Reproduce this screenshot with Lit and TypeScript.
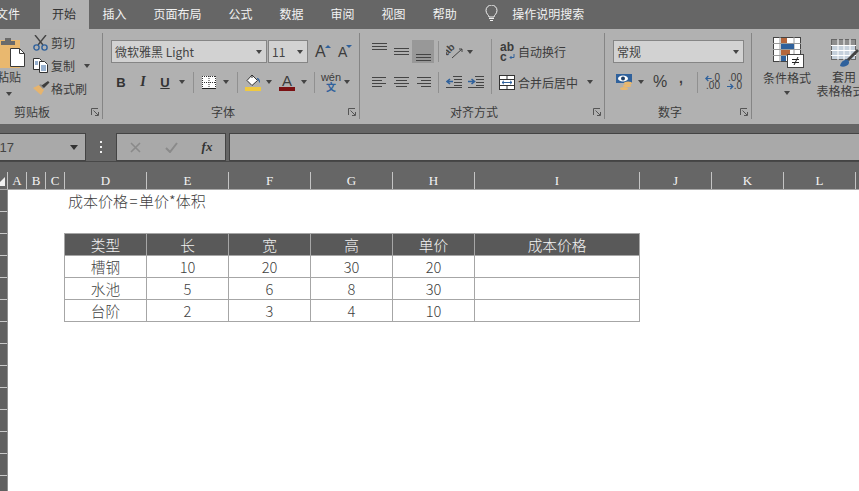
import { LitElement, html, svg, css } from 'lit';
import { customElement } from 'lit/decorators.js';

const TABS = ['文件', '开始', '插入', '页面布局', '公式', '数据', '审阅', '视图', '帮助'];
const COLS: [string, number][] = [
  ['A', 19], ['B', 19], ['C', 19], ['D', 82], ['E', 82], ['F', 82], ['G', 82],
  ['H', 82], ['I', 165], ['J', 72], ['K', 72], ['L', 72], ['', 20],
];
const HEAD = ['类型', '长', '宽', '高', '单价', '成本价格'];
const ROWS = [
  ['槽钢', '10', '20', '30', '20', ''],
  ['水池', '5', '6', '8', '30', ''],
  ['台阶', '2', '3', '4', '10', ''],
];

// horizontal lines used by the alignment icons: [x1, x2, y]
const lines = (w: number, h: number, items: number[][], color = '#444') => html`
  <svg width=${w} height=${h} viewBox="0 0 ${w} ${h}">
    ${items.map(l => svg`<path d="M${l[0]} ${l[2]}.5H${l[1]}" stroke=${color} fill="none"></path>`)}
  </svg>`;

const launcher = html`
  <svg class="launch" width="8" height="8" viewBox="0 0 8 8">
    <path d="M.5 7V.5H7M2.5 2.5L7 7M7.5 4V7.5H4" fill="none" stroke="#555"></path>
  </svg>`;

const scissors = html`
  <svg width="15" height="16" viewBox="0 0 15 16">
    <path d="M2 0l8 10M13 0L5 10" stroke="#444" stroke-width="1.4" fill="none"></path>
    <circle cx="3.5" cy="12.5" r="2.6" fill="none" stroke="#2f619c" stroke-width="1.4"></circle>
    <circle cx="11.5" cy="12.5" r="2.6" fill="none" stroke="#2f619c" stroke-width="1.4"></circle>
  </svg>`;

const copyIcon = html`
  <svg width="16" height="15" viewBox="0 0 16 15">
    <path d="M.5.5h6l2 2v9h-8z" fill="#fff" stroke="#333"></path>
    <path d="M6.5 3.5h5l3 3v8h-8z" fill="#fff" stroke="#333"></path>
    <path d="M8 8h5M8 10h5M8 12h5M2 4h3M2 6h3" stroke="#2f619c" fill="none"></path>
  </svg>`;

const brush = html`
  <svg width="17" height="15" viewBox="0 0 17 15">
    <path d="M0 7l6-3 5 5-3 5z" fill="#e6b46e"></path>
    <path d="M6 4l2-1 3 3-1 2z" fill="#8d8d8d"></path>
    <path d="M8.500 4.500L15 0l1.500 1.500L11 7z" fill="#3d3d3d"></path>
  </svg>`;

const paste = html`
  <svg width="50" height="33" viewBox="0 0 50 33">
    <rect x="3" y="3" width="33" height="28" fill="#e9b86f"></rect>
    <path d="M17 4h4V1h6v3h4v4H17z" fill="#6b6b6b"></path>
    <path d="M26.500 11.500h9l5 5v13h-14z" fill="#fff" stroke="#3a3a3a"></path>
    <path d="M35.500 11.500v5h5" fill="none" stroke="#3a3a3a"></path>
  </svg>`;

const borders = html`
  <svg width="14" height="13" viewBox="0 0 14 13">
    <rect width="14" height="13" fill="#fff"></rect>
    <path d="M.5 0v13M13.500 0v13M7 0v13M0 .5h14M0 6.500h14" stroke="#333" stroke-dasharray="1 1" fill="none"></path>
    <path d="M0 12.500h14" stroke="#222" fill="none"></path>
  </svg>`;

const bucket = html`
  <svg width="16" height="17" viewBox="0 0 16 17">
    <path d="M7 1l5.500 5.500L7 11.500 2 6.500z" fill="#fff" stroke="#333"></path>
    <path d="M7 1V4" stroke="#333" fill="none"></path>
    <path d="M12 4c2 0 3 2 3 4 0 1-1 1-1 0s-1-2-2-3z" fill="#2f619c"></path>
    <rect y="13" width="16" height="4" fill="#f0c940"></rect>
  </svg>`;

const orient = html`
  <svg width="17" height="16" viewBox="0 0 17 16">
    <text x="1" y="12" transform="rotate(-45 1 12) " font-family="Liberation Sans, sans-serif" font-size="10" font-weight="700" fill="#444">ab</text>
    <path d="M6 14L16 5M16 5h-3M16 5v3" stroke="#444" fill="none"></path>
  </svg>`;

const indent = (flip: boolean) => html`
  <svg width="16" height="12" viewBox="0 0 16 12">
    <path d="M7 .5h9M8 3.500h8M8 6.500h8M8 9.500h8M0 11.500h16" stroke="#444" fill="none"></path>
    ${flip
      ? svg`<path d="M0 5.500h6M3.500 3L6.500 5.500 3.500 8" stroke="#2f619c" stroke-width="1.600" fill="none"></path>`
      : svg`<path d="M7 5.500H1M4 3L1 5.500 4 8" stroke="#2f619c" stroke-width="1.600" fill="none"></path>`}
  </svg>`;

const merge = html`
  <svg width="16" height="15" viewBox="0 0 16 15">
    <rect x=".5" y=".5" width="15" height="14" fill="#fff" stroke="#333"></rect>
    <path d="M0 4.500h16M0 10.500h16M8 0v4M8 11v4" stroke="#333" fill="none"></path>
    <path d="M3 7.500h10M5 5.800L3 7.500l2 1.700M11 5.800l2 1.700-2 1.700" stroke="#2f619c" fill="none"></path>
  </svg>`;

const money = html`
  <svg width="17" height="17" viewBox="0 0 17 17">
    <rect y="0" width="16" height="9" fill="#2f619c"></rect>
    <ellipse cx="7" cy="4.500" rx="5" ry="3" fill="#fff"></ellipse>
    <circle cx="7" cy="4.500" r="2" fill="#1f3f66"></circle>
    <ellipse cx="12" cy="9" rx="4" ry="1.600" fill="#e9b86f"></ellipse>
    <ellipse cx="11" cy="11.500" rx="4" ry="1.600" fill="#e9b86f"></ellipse>
    <ellipse cx="8" cy="14.500" rx="4" ry="1.600" fill="#e9b86f"></ellipse>
  </svg>`;

const arrowL = html`
  <svg width="8" height="7" viewBox="0 0 8 7">
    <path d="M8 3.500H1M4 .5L1 3.500l3 3" stroke="#2f619c" stroke-width="1.500" fill="none"></path>
  </svg>`;

const arrowR = html`
  <svg width="8" height="7" viewBox="0 0 8 7">
    <path d="M0 3.500h7M4 .5l3 3-3 3" stroke="#2f619c" stroke-width="1.500" fill="none"></path>
  </svg>`;

const condIcon = html`
  <svg width="31" height="31" viewBox="0 0 31 31">
    <rect x=".5" y=".5" width="27" height="24" fill="#fff" stroke="#444"></rect>
    <path d="M7 0v25M21 0v25M0 6.500h28M0 12.500h28M0 18.500h28" stroke="#9a9a9a" fill="none"></path>
    <rect x="8" y="1" width="6" height="5" fill="#b5673c"></rect>
    <rect x="8" y="7" width="13" height="5" fill="#2f619c"></rect>
    <rect x="8" y="13" width="9" height="5" fill="#b5673c"></rect>
    <rect x="8" y="19" width="5" height="5" fill="#2f619c"></rect>
    <rect x="14.500" y="17.500" width="16" height="13" fill="#fff" stroke="#444"></rect>
    <path d="M19 22.500h7M19 25.500h7M25 20l-4 8" stroke="#222" fill="none"></path>
  </svg>`;

const tableIcon = html`
  <svg width="30" height="30" viewBox="0 0 30 30">
    <rect x=".5" y=".5" width="24" height="20" fill="#c6d1dc" stroke="#666"></rect>
    <rect x="1" y="1" width="23" height="5" fill="#8e8e8e"></rect>
    <path d="M7 0v21M13 0v21M19 0v21M0 6.500h25M0 11.500h25M0 16.500h25" stroke="#fff" fill="none"></path>
    <path d="M15 21l11-11 2 2-10 10z" fill="#444"></path>
    <path d="M9 27c1-5 5-7 8-6 2 2 1 5-2 6-2 1-4 1-6 0z" fill="#2f619c"></path>
  </svg>`;

@customElement('app-root')
export class AppRoot extends LitElement {
  static styles = css`
    :host {
      display: block;
      width: 859px;
      height: 491px;
      overflow: hidden;
      background: #fff;
      font-family: "Noto Sans CJK SC", "Liberation Sans", sans-serif;
      font-size: 12px;
      color: #3c3c3c;
    }

    /* tabs */
    .tabs {
      display: flex;
      height: 29px;
      margin-left: -17.5px;
      background: #666;
      color: #f2f2f2;
      white-space: nowrap;
    }
    .tab {
      display: flex;
      align-items: center;
      padding: 0 13.5px 3px;
    }
    .tab:first-child {
      padding-right: 20px;
    }
    .tab.on {
      padding: 0 13px 3px 12px;
      background: #b2b2b2;
      color: #333;
    }
    .bulb {
      display: flex;
      align-items: center;
      margin-left: 15px;
      gap: 14px;
      padding-bottom: 3px;
    }

    /* ribbon */
    .ribbon {
      display: flex;
      height: 86px;
      padding: 4px 0 5px;
      background: #b1b1b1;
      overflow: hidden;
    }
    .group {
      display: flex;
      flex: none;
      flex-direction: column;
      box-sizing: border-box;
      border-right: 1px solid #858585;
    }
    .body {
      flex: 1;
      display: flex;
      padding-top: 7px;
      min-height: 0;
    }
    .foot {
      display: flex;
      align-items: center;
      height: 14px;
      line-height: 14px;
    }
    .foot span {
      flex: 1;
      text-align: center;
    }
    .launch {
      margin: 0 3px 0 5px;
    }
    .caret {
      display: inline-block;
      flex: none;
      width: 0;
      height: 0;
      border: 3px solid transparent;
      border-top: 4px solid #444;
      border-bottom: 0;
    }
    .stack {
      display: flex;
      flex-direction: column;
    }
    .r1, .r2 {
      display: flex;
      align-items: center;
    }
    .r1 { height: 23px; }
    .r2 { height: 24px; margin-top: 7px; }
    .sep {
      flex: none;
      width: 1px;
      height: 21px;
      background: #909090;
    }
    .btn {
      display: flex;
      flex: none;
      align-items: center;
      justify-content: center;
      height: 23px;
    }
    .select {
      display: flex;
      flex: none;
      align-items: center;
      justify-content: space-between;
      box-sizing: border-box;
      height: 23px;
      padding: 0 4px 0 3px;
      background: #d2d2d2;
      border: 1px solid #858585;
      line-height: 1;
      font-size: 12px;
      color: #444;
    }

    /* clipboard */
    .clip { width: 125px; margin-left: -22px; }
    .paste {
      display: flex;
      flex-direction: column;
      align-items: center;
      width: 50px;
      margin-left: 6px;
      margin-top: -3px;
    }
    .paste .word { line-height: 14px; }
    .paste .caret { margin-top: 8px; }
    .tools {
      display: flex;
      flex-direction: column;
      margin-left: -1px;
      margin-top: -9px;
    }
    .tool {
      display: flex;
      align-items: center;
      height: 23px;
    }
    .tool svg { flex: none; }
    .tool .ico { display: flex; width: 18px; }
    .tool .caret { margin-left: 9px; }

    /* font */
    .font { width: 257px; }
    .font .stack { padding-left: 8px; }
    .grow {
      font-family: "Liberation Sans", sans-serif;
      font-size: 16px;
      width: 23px;
      justify-content: flex-start;
      padding-left: 1px;
      box-sizing: border-box;
    }
    .grow.small { font-size: 14px; }
    .mark {
      width: 0;
      height: 0;
      margin-top: -11px;
      margin-left: -1px;
      border: 3px solid transparent;
      border-top: 0;
      border-bottom: 3px solid #2f619c;
    }
    .mark.down {
      border-bottom: 0;
      border-top: 3px solid #2f619c;
    }
    .fmt {
      font-family: "Liberation Sans", sans-serif;
      font-size: 13px;
      color: #333;
      width: 22px;
    }
    .b { font-weight: 700; }
    .i { font-style: italic; font-family: "Liberation Serif", serif; font-weight: 700; font-size: 14px; }
    .u { font-weight: 700; text-decoration: underline; }
    .color-a {
      display: flex;
      flex-direction: column;
      align-items: center;
      width: 16px;
      font-family: "Liberation Sans", sans-serif;
      font-size: 15px;
      line-height: 13px;
      font-weight: 400;
    }
    .color-a i {
      display: block;
      width: 16px;
      height: 4px;
      background: #7b1113;
    }
    .wen {
      display: flex;
      flex-direction: column;
      align-items: center;
      width: 18px;
      line-height: 10px;
      font-family: "Liberation Sans", sans-serif;
      font-size: 11px;
    }
    .wen b {
      font-family: "Noto Sans CJK SC", sans-serif;
      font-size: 10px;
      font-weight: 700;
      color: #2f619c;
    }

    /* alignment */
    .align { width: 245px; }
    .al-left { padding-left: 8px; width: 123px; }
    .al-right { padding-left: 8px; }
    .tall {
      flex: none;
      width: 1px;
      height: 55px;
      margin-top: -1px;
      background: #909090;
    }
    .on-btn { background: #989898; }
    .al { width: 22px; }
    .al.top { align-items: flex-start; padding-top: 3px; height: 20px; }
    .al.bottom { align-items: flex-end; padding-bottom: 2px; height: 21px; }
    .ab {
      flex: none;
      display: flex;
      flex-direction: column;
      width: 18px;
      font-family: "Liberation Sans", sans-serif;
      font-size: 12px;
      line-height: 10px;
      font-weight: 700;
    }
    .ab div {
      display: flex;
      align-items: center;
      gap: 2px;
    }
    .wide-txt { margin-left: 3px; }

    /* number */
    .num { width: 147px; }
    .num .stack { padding-left: 8px; }
    .pct {
      font-family: "Liberation Sans", sans-serif;
      font-size: 16px;
      width: 14px;
    }
    .comma {
      font-family: "Liberation Sans", sans-serif;
      font-size: 14px;
      font-weight: 700;
      width: 6px;
      padding-bottom: 8px;
      box-sizing: border-box;
    }
    .dec {
      display: flex;
      flex: none;
      flex-direction: column;
      width: 15px;
      font-family: "Liberation Sans", sans-serif;
      font-size: 10px;
      line-height: 8px;
    }
    .dec div {
      display: flex;
      align-items: center;
      justify-content: flex-end;
    }

    /* styles */
    .styles {
      display: flex;
      flex: none;
      padding: 4px 0 0 5px;
      width: 110px;
    }
    .big {
      display: flex;
      flex: none;
      flex-direction: column;
      align-items: center;
      line-height: 14px;
      white-space: nowrap;
    }
    .big svg { flex: none; margin-bottom: 3px; }
    .big .caret { margin-top: 6px; }
    .big.one { width: 60px; }
    .big.one svg { margin-left: 2px; }
    .big.two { width: 58px; margin-left: -2px; }
    .big.two svg { margin-top: 2px; margin-bottom: 1px; margin-left: 3px; }
    .big.two .caret { margin: 0 0 2px 5px; vertical-align: middle; }
    .big.two span:last-child { margin-left: 4px; }

    /* formula bar */
    .fbar {
      display: flex;
      box-sizing: border-box;
      align-items: flex-start;
      height: 38px;
      padding-top: 9px;
      background: #666;
      border-bottom: 1px solid #484848;
    }
    .namebox, .fbtns, .finput {
      flex: none;
      box-sizing: border-box;
      display: flex;
      align-items: center;
      height: 28px;
      background: #a9a9a9;
      border: 1px solid #444;
    }
    .namebox {
      width: 100px;
      margin-left: -14px;
      justify-content: space-between;
      padding: 0 7px 0 9px;
      font-family: "Liberation Sans", sans-serif;
      font-size: 13px;
      color: #444;
    }
    .namebox .caret {
      border-width: 4px;
      border-top-width: 5px;
      border-bottom-width: 0;
      border-top-color: #333;
      border-left-color: transparent;
      border-right-color: transparent;
    }
    .dots {
      display: flex;
      flex: none;
      flex-direction: column;
      align-items: center;
      justify-content: center;
      gap: 3px;
      width: 30px;
      height: 28px;
    }
    .dots i {
      width: 2px;
      height: 2px;
      background: #eee;
    }
    .fbtns {
      width: 110px;
      justify-content: space-around;
    }
    .fbtns span {
      display: flex;
      justify-content: center;
      width: 36px;
    }
    .fx {
      font-family: "Liberation Serif", serif;
      font-style: italic;
      font-weight: 700;
      font-size: 13px;
      color: #333;
    }
    .finput {
      width: 640px;
      margin-left: 3px;
    }

    /* sheet */
    .colhead {
      display: flex;
      position: relative;
      align-items: flex-end;
      box-sizing: border-box;
      height: 28px;
      padding-left: 7px;
      background: #666;
      border-bottom: 1px solid #a8a8a8;
    }
    .col {
      flex: none;
      box-sizing: border-box;
      height: 17px;
      border-left: 1px solid #c4c4c4;
      text-align: center;
      font-family: "Liberation Serif", serif;
      font-size: 13px;
      line-height: 17px;
      color: #f4f4f4;
    }
    .corner {
      position: absolute;
      left: -4px;
      bottom: 3px;
      width: 0;
      height: 0;
      border-left: 9px solid transparent;
      border-bottom: 9px solid #f2f2f2;
    }
    .sheet {
      display: flex;
      height: 301px;
    }
    .rows {
      flex: none;
      box-sizing: border-box;
      width: 8px;
      background: #606060;
      border-right: 1px solid #8f8f8f;
      overflow: hidden;
    }
    .rowcell {
      box-sizing: border-box;
      height: 22px;
      border-bottom: 1px solid #c8c8c8;
    }
    .canvas {
      flex: 1;
      padding-left: 56px;
      font-size: 14.67px;
      font-weight: 300;
      color: #3f3f3f;
    }
    .title {
      height: 22px;
      line-height: 22px;
      padding-left: 4px;
      font-size: 15px;
    }
    .op {
      padding: 0 1.5px;
    }
    .table {
      display: grid;
      grid-template-columns: repeat(5, 82px) 165px;
      grid-auto-rows: 22px;
      width: max-content;
      margin-top: 21px;
      border-left: 1px solid #a6a6a6;
      border-top: 1px solid #a6a6a6;
    }
    .cell {
      box-sizing: border-box;
      display: flex;
      align-items: center;
      justify-content: center;
      border-right: 1px solid #a6a6a6;
      border-bottom: 1px solid #a6a6a6;
    }
    .cell.head {
      background: #595959;
      color: #f2f2f2;
    }
  `;

  private caret() {
    return html`<i class="caret"></i>`;
  }

  render() {
    return html`
      <div class="tabs">
        ${TABS.map(t => html`<div class="tab ${t === '开始' ? 'on' : ''}">${t}</div>`)}
        <div class="bulb">
          <svg width="13" height="17" viewBox="0 0 13 17">
            <path d="M4 12c0-2-3-3-3-6.500a5.500 5.500 0 0 1 11 0C12 9 9 10 9 12z" fill="none" stroke="#f2f2f2"></path>
            <path d="M4 13.500h5M5 15.500h3" stroke="#f2f2f2" fill="none"></path>
          </svg>
          <span>操作说明搜索</span>
        </div>
      </div>

      <div class="ribbon">
        <section class="group clip">
          <div class="body">
            <div class="paste">
              ${paste}
              <span class="word">粘贴</span>
              ${this.caret()}
            </div>
            <div class="tools">
              <div class="tool"><span class="ico">${scissors}</span>剪切</div>
              <div class="tool"><span class="ico">${copyIcon}</span>复制${this.caret()}</div>
              <div class="tool"><span class="ico">${brush}</span>格式刷</div>
            </div>
          </div>
          <div class="foot"><span>剪贴板</span>${launcher}</div>
        </section>

        <section class="group font">
          <div class="body">
            <div class="stack">
              <div class="r1">
                <div class="select" style="width:156px">微软雅黑 Light${this.caret()}</div>
                <div class="select" style="width:40px;margin-left:1px">11${this.caret()}</div>
                <div class="btn grow" style="margin-left:6px">A<i class="mark"></i></div>
                <div class="btn grow small">A<i class="mark down"></i></div>
              </div>
              <div class="r2">
                <div class="btn fmt b" style="margin-left:-1px">B</div>
                <div class="btn fmt i">I</div>
                <div class="btn fmt u">U</div>
                <span style="margin:0 8px 0 3px;display:flex">${this.caret()}</span>
                <i class="sep"></i>
                <div class="btn" style="margin-left:8px">${borders}</div>
                <span style="margin:0 8px 0 7px;display:flex">${this.caret()}</span>
                <i class="sep"></i>
                <div class="btn" style="margin-left:7px">${bucket}</div>
                <span style="margin:0 7px 0 5px;display:flex">${this.caret()}</span>
                <div class="btn color-a">A<i></i></div>
                <span style="margin:0 7px 0 6px;display:flex">${this.caret()}</span>
                <i class="sep"></i>
                <div class="btn wen" style="margin-left:7px">wén<b>文</b></div>
                <span style="margin-left:4px;display:flex">${this.caret()}</span>
              </div>
            </div>
          </div>
          <div class="foot"><span>字体</span>${launcher}</div>
        </section>

        <section class="group align">
          <div class="body">
            <div class="stack al-left">
              <div class="r1">
                <div class="btn al top">${lines(15, 8, [[0, 15, 0], [0, 15, 3], [0, 15, 6]])}</div>
                <div class="btn al">${lines(15, 8, [[0, 15, 0], [0, 15, 3], [0, 15, 6]])}</div>
                <div class="btn al bottom on-btn">${lines(15, 8, [[0, 15, 1], [0, 15, 4], [0, 15, 7]])}</div>
                <i class="sep" style="margin-left:4px"></i>
                <div class="btn" style="margin-left:7px">${orient}</div>
                <span style="margin-left:4px;display:flex">${this.caret()}</span>
              </div>
              <div class="r2">
                <div class="btn al">${lines(15, 10, [[0, 14, 0], [0, 10, 3], [0, 14, 6], [0, 10, 9]])}</div>
                <div class="btn al">${lines(15, 10, [[0, 15, 0], [2, 13, 3], [0, 15, 6], [2, 13, 9]])}</div>
                <div class="btn al">${lines(15, 10, [[1, 15, 0], [5, 15, 3], [1, 15, 6], [5, 15, 9]])}</div>
                <i class="sep" style="margin-left:4px"></i>
                <div class="btn" style="margin-left:7px;width:22px;justify-content:flex-start">${indent(false)}</div>
                <div class="btn" style="width:16px">${indent(true)}</div>
              </div>
            </div>
            <i class="tall"></i>
            <div class="stack al-right">
              <div class="r1">
                <div class="ab">
                  <span>ab</span>
                  <div>c<svg width="6" height="6" viewBox="0 0 6 6"><path d="M5 0v3.500H1M2.500 2L1 3.500 2.500 5" stroke="#2f619c" fill="none"></path></svg></div>
                </div>
                <span>自动换行</span>
              </div>
              <div class="r2" style="margin-left:-1px">
                ${merge}
                <span class="wide-txt">合并后居中</span>
                <span style="margin-left:9px;display:flex">${this.caret()}</span>
              </div>
            </div>
          </div>
          <div class="foot"><span>对齐方式</span>${launcher}</div>
        </section>

        <section class="group num">
          <div class="body">
            <div class="stack">
              <div class="r1">
                <div class="select" style="width:131px">常规${this.caret()}</div>
              </div>
              <div class="r2">
                <div class="btn" style="margin-left:3px">${money}</div>
                <span style="margin:0 9px 0 5px;display:flex">${this.caret()}</span>
                <div class="btn pct">%</div>
                <div class="btn comma" style="margin-left:11px">,</div>
                <i class="sep" style="margin-left:13px"></i>
                <div class="dec" style="margin-left:7px">
                  <div>${arrowL}<span>.0</span></div>
                  <div>.00</div>
                </div>
                <div class="dec" style="margin-left:7px">
                  <div>.00</div>
                  <div>${arrowR}<span>.0</span></div>
                </div>
              </div>
            </div>
          </div>
          <div class="foot"><span>数字</span>${launcher}</div>
        </section>

        <section class="styles">
          <div class="big one">
            ${condIcon}
            <span>条件格式</span>
            ${this.caret()}
          </div>
          <div class="big two">
            ${tableIcon}
            <span>套用</span>
            <span>表格格式${this.caret()}</span>
          </div>
        </section>
      </div>

      <div class="fbar">
        <div class="namebox"><span>I17</span>${this.caret()}</div>
        <div class="dots"><i></i><i></i><i></i></div>
        <div class="fbtns">
          <span><svg width="11" height="11" viewBox="0 0 11 11"><path d="M1 1l9 9M10 1l-9 9" stroke="#8a8a8a" stroke-width="1.600"></path></svg></span>
          <span><svg width="13" height="11" viewBox="0 0 13 11"><path d="M1 6l4 4 7-9" stroke="#8a8a8a" stroke-width="2" fill="none"></path></svg></span>
          <span class="fx">fx</span>
        </div>
        <div class="finput"></div>
      </div>

      <div class="colhead">
        <i class="corner"></i>
        ${COLS.map(c => html`<div class="col" style="width:${c[1]}px">${c[0]}</div>`)}
      </div>

      <div class="sheet">
        <div class="rows">
          ${Array.from({ length: 14 }, () => html`<div class="rowcell"></div>`)}
        </div>
        <div class="canvas">
          <div class="title">成本价格<span class="op">=</span>单价*体积</div>
          <div class="table">
            ${HEAD.map(h => html`<div class="cell head">${h}</div>`)}
            ${ROWS.map(r => r.map(v => html`<div class="cell">${v}</div>`))}
          </div>
        </div>
      </div>
    `;
  }
}
